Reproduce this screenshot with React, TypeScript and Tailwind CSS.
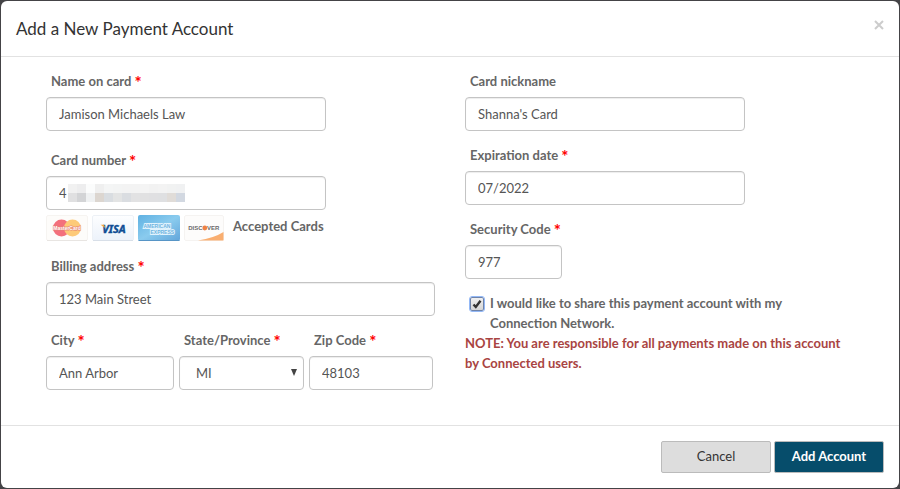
import { useState } from "react";
import type { ReactNode } from "react";

const inputClass =
    "block h-[34px] w-full rounded border border-[#c4c4c4] bg-white px-3 text-[13px] text-[#555] shadow-[inset_0_1px_1px_rgba(0,0,0,0.075)] outline-none";

// the hidden digits of the card number, two rows of blocks
const maskTop = ["#f1f1f1", "#ededee", "#fbfcfc", "#efefef", "#f4f5f5", "#f3f4f4", "#f3f3f3", "#f3f3f3", "#f4f4f4", "#f2f2f2", "#f3f3f3", "#f1f2f2", "#f0f1f2"];
const maskBottom = ["#e0e0e1", "#d3d4d6", "#eff1f2", "#dcd6d0", "#d9dde1", "#e3e4e4", "#dadde1", "#e2e2e3", "#e1e1e2", "#e0e0e2", "#dfe0e2", "#e0dcd8", "#d2d8e1"];

interface FieldProps {
    id: string;
    label: string;
    required?: boolean;
    children: ReactNode;
}

function Field({ id, label, required, children }: FieldProps) {
    return (
        <div>
            <label htmlFor={id} className="mb-1.5 block h-5 pl-[5px] text-[13px] leading-5 font-bold whitespace-nowrap text-[#666]">
                {label} {required && <span className="align-middle text-[17px] leading-none text-[#f00]">*</span>}
            </label>
            {children}
        </div>
    );
}

function MasterCard() {
    return (
        <svg width="42" height="26" viewBox="0 0 42 26" role="img" aria-label="MasterCard">
            <rect x="0.5" y="0.5" width="41" height="25" rx="1.5" fill="#fdfcfa" stroke="#f6f4f1" />
            <path d="M1 25.5h40" stroke="#e8e5e2" />
            <circle cx="15.5" cy="13" r="8.5" fill="#f3707c" />
            <circle cx="26.5" cy="13" r="8.5" fill="#fdca78" />
            <text x="21" y="15" textAnchor="middle" fontSize="5" fontWeight="bold" fontFamily="Liberation Sans, sans-serif" fill="#fff" stroke="#e88076" strokeWidth="1" paintOrder="stroke">MasterCard</text>
        </svg>
    );
}

function Visa() {
    return (
        <svg width="42" height="26" viewBox="0 0 42 26" role="img" aria-label="Visa">
            <defs>
                <linearGradient id="visaBg" x1="0" y1="0" x2="0" y2="1">
                    <stop offset="0" stopColor="#fdfeff" />
                    <stop offset="1" stopColor="#ecf2fa" />
                </linearGradient>
            </defs>
            <rect x="0.5" y="0.5" width="41" height="25" rx="1.5" fill="url(#visaBg)" stroke="#edf1f6" />
            <path d="M1 25.5h40" stroke="#d8dfe8" />
            <text x="22" y="18" textAnchor="middle" fontSize="11" fontWeight="bold" fontStyle="italic" fontFamily="Noto Sans, sans-serif" fill="#0f4d94" stroke="#0f4d94" strokeWidth="0.4">VISA</text>
            <path d="M8.500 9.800h3.500l1.300 3.200z" fill="#f5a83c" />
        </svg>
    );
}

function Amex() {
    return (
        <svg width="42" height="26" viewBox="0 0 42 26" role="img" aria-label="American Express">
            <defs>
                <linearGradient id="amexBg" x1="0" y1="0" x2="1" y2="1">
                    <stop offset="0" stopColor="#5fb1e2" />
                    <stop offset="0.5" stopColor="#8acbee" />
                    <stop offset="1" stopColor="#62a5da" />
                </linearGradient>
            </defs>
            <rect width="42" height="26" rx="2" fill="url(#amexBg)" />
            <path d="M0.500 25.500h41" stroke="#5795c6" />
            <g fontFamily="Liberation Sans, sans-serif" fontSize="5" fontWeight="bold" fill="#6fb3e0" stroke="#e2f3fd" strokeWidth="1.800" paintOrder="stroke">
                <text x="5.500" y="12.500">AMERICAN</text>
                <text x="12.500" y="18.500">EXPRESS</text>
            </g>
        </svg>
    );
}

function Discover() {
    return (
        <svg width="40" height="26" viewBox="0 0 40 26" role="img" aria-label="Discover">
            <rect x="0.5" y="0.5" width="39" height="25" rx="1.5" fill="#fdfcfb" stroke="#f5f3f1" />
            <path d="M14 25.500Q30 23 39.500 17v8.500z" fill="#f9ae70" />
            <g fontFamily="Liberation Sans, sans-serif" fontSize="6" fontWeight="bold" fill="#6a6a6a">
                <text x="18.500" y="15" textAnchor="end">DISC</text>
                <text x="23" y="15">VER</text>
            </g>
            <circle cx="20.800" cy="13" r="2.400" fill="#ee8144" />
        </svg>
    );
}

export default function App() {
    const [shared, setShared] = useState(true);

    return (
        <div className="flow-root min-h-screen bg-[#444346] font-['Lato',sans-serif]">
            <main className="m-px rounded-md bg-white">
                <header className="flex items-start justify-between border-b border-[#e2e2e2] p-[15px]">
                    <h1 className="text-[17px] leading-[25px] text-[#333]">Add a New Payment Account</h1>
                    <button type="button" aria-label="Close" className="text-[#ccc]">
                        <svg width="10" height="18" viewBox="0 0 10 18" fill="none" stroke="currentColor" strokeWidth="2">
                            <path d="M1 5l8 8M9 5l-8 8" />
                        </svg>
                    </button>
                </header>

                <form className="grid grid-cols-2 gap-[30px] px-[45px] pt-3.5 pb-[35px]">
                    <div>
                        <Field id="name" label="Name on card" required>
                            <input id="name" type="text" defaultValue="Jamison Michaels Law" className={inputClass + " max-w-[280px]"} />
                        </Field>
                        <div className="mt-[19px]">
                            <Field id="number" label="Card number" required>
                                <div className="relative max-w-[280px]">
                                    <input id="number" type="text" defaultValue="4" className={inputClass} />
                                    <svg className="absolute top-2 left-[22px]" width="117" height="18" shapeRendering="crispEdges" aria-hidden="true">
                                        {maskTop.map((color, i) => (
                                            <rect key={i} x={i * 9} y="0" width="9" height="9" fill={color} />
                                        ))}
                                        {maskBottom.map((color, i) => (
                                            <rect key={i} x={i * 9} y="9" width="9" height="9" fill={color} />
                                        ))}
                                    </svg>
                                </div>
                            </Field>
                        </div>
                        <div className="mt-[5px] mb-[15px] flex gap-1">
                            <MasterCard />
                            <Visa />
                            <Amex />
                            <Discover />
                            <span className="pl-[5px] text-[13px] leading-[22px] font-bold text-[#666]">Accepted Cards</span>
                        </div>
                        <Field id="address" label="Billing address" required>
                            <input id="address" type="text" defaultValue="123 Main Street" className={inputClass} />
                        </Field>
                        <div className="mt-3.5 grid grid-cols-[128fr_125fr_124fr] gap-[5px] pr-0.5">
                            <Field id="city" label="City" required>
                                <input id="city" type="text" defaultValue="Ann Arbor" className={inputClass} />
                            </Field>
                            <Field id="state" label="State/Province" required>
                                <div className="relative">
                                    <select id="state" defaultValue="MI" className={inputClass + " appearance-none pt-0.5 pl-4"}>
                                        <option>MI</option>
                                        <option>OH</option>
                                    </select>
                                    <svg className="pointer-events-none absolute top-[13px] right-1.5" width="8" height="7" viewBox="0 0 8 7" aria-hidden="true">
                                        <path d="M1 0h6L4 7z" fill="#444" />
                                    </svg>
                                </div>
                            </Field>
                            <Field id="zip" label="Zip Code" required>
                                <input id="zip" type="text" defaultValue="48103" className={inputClass} />
                            </Field>
                        </div>
                    </div>

                    <div className="space-y-3.5">
                        <Field id="nickname" label="Card nickname">
                            <input id="nickname" type="text" defaultValue="Shanna's Card" className={inputClass + " max-w-[280px]"} />
                        </Field>
                        <Field id="expiration" label="Expiration date" required>
                            <input id="expiration" type="text" defaultValue="07/2022" className={inputClass + " max-w-[280px]"} />
                        </Field>
                        <Field id="security" label="Security Code" required>
                            <input id="security" type="text" defaultValue="977" className={inputClass + " max-w-[97px]"} />
                        </Field>
                        <div className="text-[13px] leading-5 font-bold">
                            <div className="flex gap-1.5 pl-[5px] text-[#666]">
                                <span className="relative mt-1 h-3.5 w-3.5 shrink-0">
                                    <input
                                        id="share"
                                        type="checkbox"
                                        checked={shared}
                                        onChange={(e) => setShared(e.target.checked)}
                                        className="block h-3.5 w-3.5 appearance-none rounded-xs border border-[#6f83a8] bg-linear-to-b from-[#f0f0f0] to-[#d5d5d5] outline-1 outline-[#93b8f6]"
                                    />
                                    {shared && (
                                        <svg className="pointer-events-none absolute inset-0" width="14" height="14" viewBox="0 0 14 14" fill="none" aria-hidden="true">
                                            <path d="M3.500 7.500l2.300 2.500L10.500 3.800" stroke="#333" strokeWidth="2.400" />
                                        </svg>
                                    )}
                                </span>
                                <label htmlFor="share" className="max-w-[310px]">
                                    I would like to share this payment account with my Connection Network.
                                </label>
                            </div>
                            <p className="text-[#a94442]">NOTE: You are responsible for all payments made on this account by Connected users.</p>
                        </div>
                    </div>
                </form>

                <footer className="flex justify-end gap-[3px] border-t border-[#e2e2e2] p-[15px]">
                    <button type="button" className="h-8 w-[110px] rounded-xs border border-[#bbb] bg-[#ddd] text-[13px] text-[#333]">
                        Cancel
                    </button>
                    <button type="button" className="h-8 w-[110px] rounded-xs border border-[#bbb] bg-[#064d6b] text-[13px] font-bold text-white">
                        Add Account
                    </button>
                </footer>
            </main>
        </div>
    );
}
